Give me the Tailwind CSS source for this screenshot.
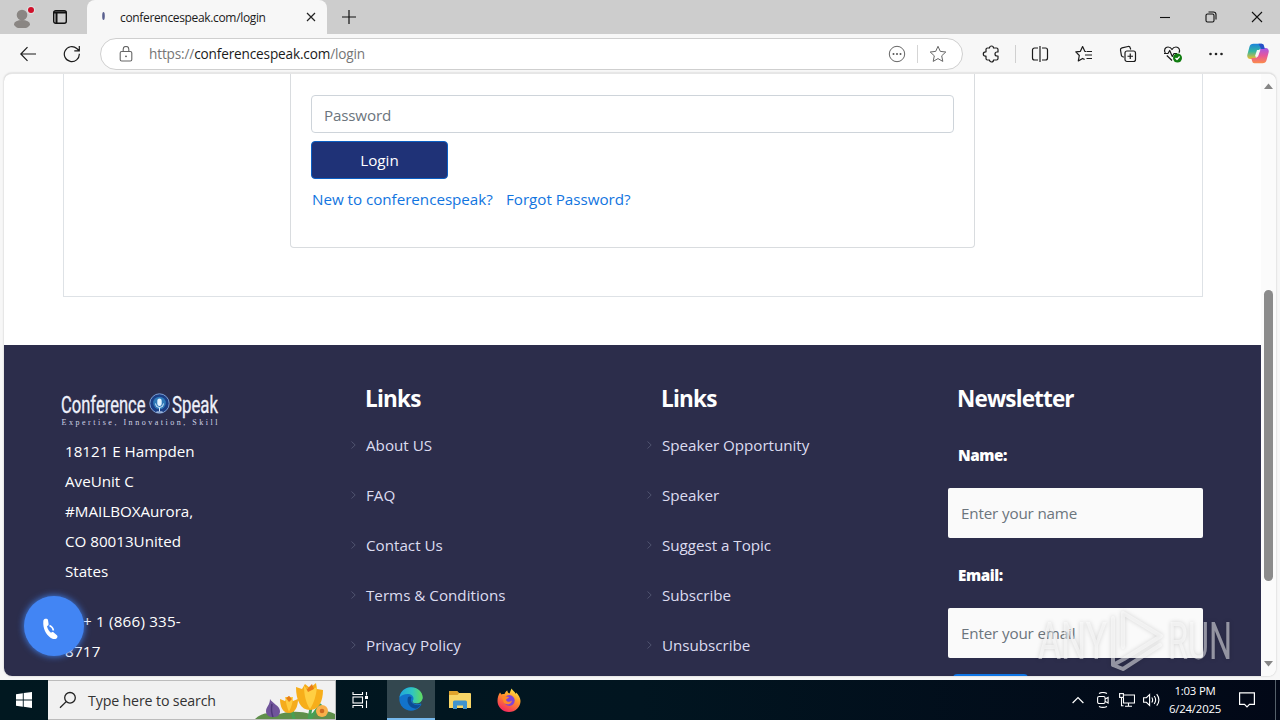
<!DOCTYPE html>
<html lang="en">
<head>
  <meta charset="UTF-8">
  <title>conferencespeak.com/login</title>
  <script src="https://cdn.jsdelivr.net/npm/@tailwindcss/browser@4"></script>
</head>
<body class="w-[1280px] h-[720px] overflow-hidden flex flex-col relative bg-[#f7f7f7] font-['Open_Sans',sans-serif] text-[15.2px]">

  <!-- Tab strip -->
  <div class="h-[34px] shrink-0 bg-[#cdcdcd] flex items-stretch">
    <div class="w-[87px] flex items-center pl-3 gap-[18px]">
      <svg class="w-6 h-6 shrink-0 -mt-[3px]" viewBox="0 0 24 24">
        <circle cx="10" cy="11" r="5.3" fill="#8a8683"/>
        <ellipse cx="10" cy="20.3" rx="8" ry="4.2" fill="#8a8683"/>
        <circle cx="19" cy="6" r="4.2" fill="#dedede"/>
        <circle cx="19" cy="6" r="3" fill="#d0112b"/>
      </svg>
      <svg class="w-4 h-4 -ml-[2px] shrink-0" viewBox="0 0 16 16" fill="none" stroke="#111" stroke-width="1.4">
        <rect x="1.7" y="1.7" width="12.6" height="12.6" rx="2"/>
        <path d="M1.7 3.500h12.6M4.500 4v10" stroke-width="2"/>
      </svg>
    </div>
    <div class="w-[240px] bg-[#f7f7f7] rounded-t-lg flex items-center">
      <svg class="w-4 h-4 ml-[8px]" viewBox="0 0 16 16"><ellipse cx="8.5" cy="7" rx="1.300" ry="4" fill="#5a608f"/></svg>
      <span class="ml-[9px] mt-px w-[170px] text-[12px] tracking-[-0.34px] text-[#1b1b1b]">conferencespeak.com/login</span>
      <svg class="w-3 h-3 ml-[15px]" viewBox="0 0 12 12" stroke="#222" stroke-width="1.2"><path d="M2 2l8 8M10 2l-8 8"/></svg>
    </div>
    <svg class="w-4 h-4 ml-[14px] self-center" viewBox="0 0 16 16" stroke="#111" stroke-width="1.2"><path d="M8 1v14M1 8h14"/></svg>
    <div class="ml-auto flex items-center gap-[34px] pr-[17px]">
      <svg class="w-3 h-3" viewBox="0 0 12 12" stroke="#111" stroke-width="1.1"><path d="M1 6.5h10"/></svg>
      <svg class="w-3 h-3" viewBox="0 0 12 12" fill="none" stroke="#111" stroke-width="1.1"><rect x="1" y="3" width="8" height="8" rx="1.5"/><path d="M3.5 1h5a2.5 2.5 0 0 1 2.500 2.500v5"/></svg>
      <svg class="w-3 h-3" viewBox="0 0 12 12" stroke="#111" stroke-width="1.1"><path d="M1 1l10 10M11 1L1 11"/></svg>
    </div>
  </div>

  <!-- Toolbar -->
  <div class="h-[39px] shrink-0 flex items-center pl-5">
    <svg class="w-4 h-4" viewBox="0 0 16 16" fill="none" stroke="#1b1b1b" stroke-width="1.2"><path d="M16 8H.8M7.500 1.200L.800 8l6.700 6.800"/></svg>
    <svg class="w-[18px] h-[18px] ml-[27px]" viewBox="0 0 18 18" fill="none" stroke="#1b1b1b" stroke-width="1.2"><path d="M16.300 8.800A7.500 7.500 0 1 1 13.800 3.500L16 5.500M16.300 1v4.800h-5"/></svg>
    <div class="ml-[19px] w-[863px] h-[32px] bg-white border border-[#cfcfcf] rounded-full flex items-center">
      <svg class="w-4 h-4 ml-[17px]" viewBox="0 0 16 16" fill="none" stroke="#666" stroke-width="1.100"><rect x="2.200" y="5.500" width="11.600" height="9.500" rx="1.500"/><path d="M5.200 5.500V3.200a2.800 2.800 0 0 1 5.600 0v2.300"/><circle cx="8" cy="10.300" r=".9" fill="#555" stroke="none"/></svg>
      <span class="ml-[15px] mt-px text-[13.6px] tracking-[-0.15px] text-[#767676]">https://<span class="text-[#1b1b1b]">conferencespeak.com</span>/login</span>
      <div class="ml-auto flex items-center pr-[15px]">
        <svg class="w-[18px] h-[18px]" viewBox="0 0 18 18" fill="none" stroke="#666" stroke-width="1"><circle cx="9" cy="9" r="7.700"/><g fill="#555" stroke="none"><circle cx="5.500" cy="9" r="1"/><circle cx="9" cy="9" r="1"/><circle cx="12.500" cy="9" r="1"/></g></svg>
        <div class="w-px h-[18px] bg-[#d5d5d5] ml-[11px]"></div>
        <svg class="w-[18px] h-[18px] ml-[11px]" viewBox="0 0 18 18" fill="none" stroke="#666" stroke-width="1" stroke-linejoin="round"><path d="M9 1.300l2.300 5.100 5.500.6-4.100 3.800 1.100 5.600L9 13.600l-4.800 2.800 1.100-5.600L1.200 7l5.500-.6z"/></svg>
      </div>
    </div>
    <svg class="w-[18px] h-[18px] ml-[19px]" viewBox="0 0 18 18" fill="none" stroke="#1b1b1b" stroke-width="1.200" stroke-linejoin="round"><path d="M5.500 3h2a2 2 0 0 1 4 0h3a1.500 1.500 0 0 1 1.500 1.500V7h-1a1.900 1.900 0 0 0 0 4h1v2.500a1.500 1.500 0 0 1-1.500 1.500h-3a2 2 0 0 1-4 0h-2A1.500 1.500 0 0 1 4 13.500v-2.300h-.5a2.200 2.200 0 0 1 0-4.400H4V4.500A1.500 1.500 0 0 1 5.500 3z"/></svg>
    <div class="w-px h-[18px] bg-[#d0d0d0] ml-[15px]"></div>
    <svg class="w-[18px] h-[18px] ml-[15px]" viewBox="0 0 18 18" fill="none" stroke="#1b1b1b" stroke-width="1.200"><path d="M7 3H3.500a2 2 0 0 0-2 2v8a2 2 0 0 0 2 2H7M11 3h3.500a2 2 0 0 1 2 2v8a2 2 0 0 1-2 2H11M9 1v16"/></svg>
    <svg class="w-[18px] h-[18px] ml-[26px]" viewBox="0 0 18 18" fill="none" stroke="#1b1b1b" stroke-width="1.200" stroke-linejoin="round"><path d="M11 6.500L9.800 6.300 7.600 1.500 5.400 6.300.8 6.900l3.500 3.600-1 5.400 4.300-2.500 2 1.200M11.500 6.500H17M10 10h7M11.500 13.500H17"/></svg>
    <svg class="w-[18px] h-[18px] ml-[26px]" viewBox="0 0 18 18" fill="none" stroke="#1b1b1b" stroke-width="1.200"><rect x="6" y="6" width="10.500" height="10.500" rx="2"/><path d="M11.250 8.500v5.500M8.500 11.250H14M4.800 12.200L3.300 11.500a2 2 0 0 1-1-1.600L1.500 5A2 2 0 0 1 3 2.800l6-1.300A2 2 0 0 1 11.300 3l.4 1.500"/></svg>
    <svg class="w-5 h-[18px] ml-[26px]" viewBox="0 0 20 18" fill="none" stroke="#1b1b1b" stroke-width="1.200" stroke-linejoin="round"><path d="M2.300 8C.5 5 2.200 2 5 2c2 0 3.400 1.300 4 2.500C9.600 3.300 11 2 13 2c2.800 0 4.500 3 3 5.700M3.800 10.500L9 15.500M1 8.500h4l1.700-3 2.600 6 1.700-3h3"/><circle cx="14.500" cy="13" r="4.500" fill="#107c10" stroke="none"/><path d="M12.500 13l1.500 1.500 2.600-3" stroke="#fff"/></svg>
    <svg class="w-4 h-4 ml-[25px]" viewBox="0 0 16 16" fill="#222"><circle cx="2.500" cy="8" r="1.300"/><circle cx="8" cy="8" r="1.300"/><circle cx="13.500" cy="8" r="1.300"/></svg>
    <svg class="w-[22px] h-[21px] ml-[23px]" viewBox="0 0 22 21">
      <defs>
        <linearGradient id="cpA" x1="0" y1="0" x2="0" y2="1"><stop offset="0" stop-color="#1b83dc"/><stop offset=".5" stop-color="#35b7a0"/><stop offset="1" stop-color="#f2bd2c"/></linearGradient>
        <linearGradient id="cpB" x1="0" y1="0" x2="0" y2="1"><stop offset="0" stop-color="#a259e8"/><stop offset=".5" stop-color="#e7569b"/><stop offset="1" stop-color="#fb8b4a"/></linearGradient>
      </defs>
      <path d="M6.500.8h8c1.500 0 2 .8 2.500 2.500l.7 2.700h-3.500c-2 0-2.700 1-3.200 2.500L9 14c-.5 1.500-1 2-2.500 2H3.200C.8 16-.2 14 .4 11.500l2-7.500C3 1.800 4.300.8 6.500.8z" fill="url(#cpA)"/>
      <path d="M15.500 20.200h-8c-1.500 0-2-.8-2.500-2.500L4.300 15h3.500c2 0 2.700-1 3.200-2.500L13 7c.5-1.500 1-2 2.500-2h3.300c2.400 0 3.400 2 2.800 4.500l-2 7.500c-.6 2.200-1.900 3.200-4.100 3.200z" fill="url(#cpB)"/>
      <path d="M11.500.8h3c1.500 0 2 .8 2.500 2.500l.7 2.700h-3.500z" fill="#2750c8"/>
      <path d="M10 7h3.300l-2.300 6.500H7.900z" fill="#f7f7f7"/>
    </svg>
  </div>

  <!-- Page viewport -->
  <div class="h-[603px] shrink-0 ml-1 mr-[4px] flex rounded-lg overflow-hidden bg-white border-t border-[#e6e6e6] shadow-[0_0_2px_#bbb]">
    <div class="w-[1257px] flex flex-col">
      <div class="h-[223px] shrink-0 ml-[59px] w-[1140px] border border-t-0 border-[#dee2e6]">
        <div class="h-[174px] ml-[226px] w-[685px] border border-t-0 border-[#d9dcdf] rounded-b px-5 pt-[21px]">
          <input type="password" placeholder="Password" class="block w-full h-[38px] px-3 pt-[2px] border border-[#ced4da] rounded placeholder:text-[#6c757d] tracking-[-0.17px]">
          <button class="mt-2 block w-[137px] h-[38px] rounded bg-[#1f3277] border border-[#0b5fc4] text-white">Login</button>
          <div class="flex gap-[13px] mt-[8px] pl-px leading-6 tracking-[-0.03px] text-[#1275e0]">
            <a href="#" class="w-[181px] whitespace-nowrap">New to conferencespeak?</a>
            <a href="#" class="whitespace-nowrap">Forgot Password?</a>
          </div>
        </div>
      </div>

      <footer class="mt-[48px] flex-1 min-h-0 overflow-hidden bg-[#2c2d4b] flex text-[#dcdcf0]">
        <div class="w-[291px] shrink-0 pl-[57px] pt-[45px] text-white">
          <svg class="w-[170px] h-[40px] overflow-visible" viewBox="61 390 170 40">
            <g fill="#eef0fa" font-family="Roboto" font-size="23">
              <text x="61" y="412.500" textLength="84.500" lengthAdjust="spacingAndGlyphs" stroke="#eef0fa" stroke-width=".3">Conference</text>
              <text x="172" y="412.500" textLength="46" lengthAdjust="spacingAndGlyphs" stroke="#eef0fa" stroke-width=".3">Speak</text>
            </g>
            <circle cx="159.500" cy="403.500" r="9.700" fill="#1b3f86" stroke="#7d9fd4" stroke-width="1"/>
            <circle cx="159.500" cy="403" r="6.300" fill="#2f7ab8"/>
            <rect x="157.300" y="398.500" width="4.400" height="7.500" rx="2.200" fill="#e4f4ff"/>
            <path d="M155.500 403.500a4 4 0 0 0 8 0M159.500 407.500v4M156.500 412h6" fill="none" stroke="#d5ebff"/>
            <text x="61.500" y="425" font-family="Liberation Serif" font-size="8" fill="#d2d4e6" textLength="156">Expertise, Innovation, Skill</text>
          </svg>
          <div class="ml-[4px] mt-[6px] leading-[30px] whitespace-nowrap tracking-[-0.02px]">
            <p>18121 E Hampden<br>AveUnit C<br>#MAILBOXAurora,<br>CO 80013United<br>States</p>
            <p class="mt-5 tracking-[0.2px]"><span class="inline-block w-[18px]"></span>+ 1 (866) 335-<br>8717</p>
          </div>
        </div>

        <div class="w-[296px] shrink-0 pl-[56px] pt-[38px]">
          <h4 class="ml-[14px] text-[22.5px] tracking-[-0.75px] font-bold leading-8 text-white">Links</h4>
          <ul class="mt-[5px] leading-[50px]">
            <li class="flex items-center gap-[10px]"><svg class="w-[5px] h-2 shrink-0" viewBox="0 0 5 8" fill="none" stroke="#50536f"><path d="M.5.5L4.200 4 .5 7.500"/></svg>About US</li>
            <li class="flex items-center gap-[10px]"><svg class="w-[5px] h-2 shrink-0" viewBox="0 0 5 8" fill="none" stroke="#50536f"><path d="M.5.5L4.200 4 .5 7.500"/></svg>FAQ</li>
            <li class="flex items-center gap-[10px]"><svg class="w-[5px] h-2 shrink-0" viewBox="0 0 5 8" fill="none" stroke="#50536f"><path d="M.5.5L4.200 4 .5 7.500"/></svg>Contact Us</li>
            <li class="flex items-center gap-[10px]"><svg class="w-[5px] h-2 shrink-0" viewBox="0 0 5 8" fill="none" stroke="#50536f"><path d="M.5.5L4.200 4 .5 7.500"/></svg>Terms &amp; Conditions</li>
            <li class="flex items-center gap-[10px]"><svg class="w-[5px] h-2 shrink-0" viewBox="0 0 5 8" fill="none" stroke="#50536f"><path d="M.5.5L4.200 4 .5 7.500"/></svg>Privacy Policy</li>
          </ul>
        </div>

        <div class="w-[295px] shrink-0 pl-[56px] pt-[38px]">
          <h4 class="ml-[14px] text-[22.5px] tracking-[-0.75px] font-bold leading-8 text-white">Links</h4>
          <ul class="mt-[5px] leading-[50px] tracking-[-0.03px]">
            <li class="flex items-center gap-[10px]"><svg class="w-[5px] h-2 shrink-0" viewBox="0 0 5 8" fill="none" stroke="#50536f"><path d="M.5.5L4.200 4 .5 7.500"/></svg>Speaker Opportunity</li>
            <li class="flex items-center gap-[10px]"><svg class="w-[5px] h-2 shrink-0" viewBox="0 0 5 8" fill="none" stroke="#50536f"><path d="M.5.5L4.200 4 .5 7.500"/></svg>Speaker</li>
            <li class="flex items-center gap-[10px]"><svg class="w-[5px] h-2 shrink-0" viewBox="0 0 5 8" fill="none" stroke="#50536f"><path d="M.5.5L4.200 4 .5 7.500"/></svg>Suggest a Topic</li>
            <li class="flex items-center gap-[10px]"><svg class="w-[5px] h-2 shrink-0" viewBox="0 0 5 8" fill="none" stroke="#50536f"><path d="M.5.5L4.200 4 .5 7.500"/></svg>Subscribe</li>
            <li class="flex items-center gap-[10px]"><svg class="w-[5px] h-2 shrink-0" viewBox="0 0 5 8" fill="none" stroke="#50536f"><path d="M.5.5L4.200 4 .5 7.500"/></svg>Unsubscribe</li>
          </ul>
        </div>

        <div class="ml-[62px] w-[255px] shrink-0 pt-[38px]">
          <h4 class="ml-[9px] text-[22.5px] tracking-[-0.85px] font-bold leading-8 text-white">Newsletter</h4>
          <label class="block ml-[10px] mt-[15px] mb-[8px] leading-[50px] font-extrabold tracking-[-0.4px] text-white">Name:</label>
          <input type="text" placeholder="Enter your name" class="block w-full h-[50px] px-[13px] bg-[#fafafa] rounded-xs tracking-[-0.15px] placeholder:text-[#6c757d]">
          <label class="block ml-[10px] mt-[12px] mb-[8px] leading-[50px] font-extrabold tracking-[-0.4px] text-white">Email:</label>
          <input type="text" placeholder="Enter your email" class="block w-full h-[50px] px-[13px] bg-[#fafafa] rounded-xs tracking-[-0.15px] placeholder:text-[#6c757d]">
          <button class="ml-[5px] mt-4 block w-[75px] h-[38px] rounded bg-[#0f76e6]"></button>
        </div>
      </footer>
    </div>

    <!-- Scrollbar -->
    <div class="w-[15px] bg-[#fbfbfb] flex flex-col items-center pt-[9px] pb-[9px]">
      <svg class="w-[9px] h-[6px]" viewBox="0 0 9 6"><path d="M0 6L4.500.5 9 6z" fill="#868686"/></svg>
      <div class="mt-[201px] w-[9px] h-[291px] rounded-full bg-[#8b8b8b]"></div>
      <svg class="mt-auto w-[9px] h-[6px]" viewBox="0 0 9 6"><path d="M0 0h9L4.500 5.500z" fill="#868686"/></svg>
    </div>
  </div>

  <!-- Call button -->
  <div class="absolute left-[24px] top-[596px] w-[60px] h-[60px] rounded-full bg-[#4285f4] shadow-[0_0_7px_#4285f4]">
    <svg class="w-[18px] h-[24px] absolute left-[18px] top-[22px]" viewBox="0 0 18 24" fill="#fff">
      <path d="M2.500 1C4 .4 5.800.7 6 2l.6 4c.2 1.200-.8 1.800-1.600 2.200.6 2.800 2 5 4 6.500.8-.6 1.700-1 2.700-.2l3.200 2.700c1 .9.700 2.300-.4 3.200-1.500 1.200-4 .8-6-.7C3.900 16.500.8 10.500 1.300 3.500 1.400 2.200 1.700 1.400 2.500 1z"/>
      <path d="M7.500 7.500c2 .8 3.600 2.700 4 5" fill="none" stroke="#fff" stroke-width="1.500"/>
    </svg>
  </div>

  <!-- Watermark -->
  <svg class="absolute left-[1025px] top-[604px] w-[225px] h-[72px] drop-shadow-[0_0_2px_rgba(0,0,0,0.3)]" viewBox="1025 604 225 72">
    <g fill="#fff" fill-opacity=".5" font-family="Roboto" font-size="52" font-weight="400">
      <text x="1038" y="659" textLength="69" lengthAdjust="spacingAndGlyphs">ANY</text>
      <text x="1168" y="659" textLength="64" lengthAdjust="spacingAndGlyphs">RUN</text>
    </g>
    <g fill="none" stroke="#fff" stroke-opacity=".5" stroke-width="4" stroke-linejoin="round" stroke-linecap="round">
      <path d="M1123 647v-34l38 23-37 23-11 6v-47M1123 669l37-24M1123 669l-10-4"/>
    </g>
  </svg>

  <!-- Taskbar -->
  <div class="mt-auto h-[40px] shrink-0 flex items-stretch bg-linear-to-r from-[#011820] via-[#011520] to-[#020817] text-white">
    <div class="w-[48px] flex items-center justify-center">
      <svg class="w-4 h-4" viewBox="0 0 16 16" fill="#fff"><path d="M0 2.200l6.800-1v6.300H0zM7.700 1.100L16 0v7.500H7.700zM0 8.400h6.800v6.300l-6.800-1zM7.700 8.400H16V16l-8.300-1.200z"/></svg>
    </div>
    <div class="w-[288px] bg-[#f1f1f1] border border-[#bcbcbc] border-l-0 flex items-center text-[#333]">
      <svg class="w-[18px] h-[18px] ml-[11px]" viewBox="0 0 18 18" fill="none" stroke="#222" stroke-width="1.300"><circle cx="11" cy="6.800" r="5.300"/><path d="M7.200 10.600L1 16.800"/></svg>
      <span class="ml-[11px] mt-px text-[14.2px] tracking-[-0.14px]">Type here to search</span>
      <svg class="w-[80px] h-[38px] ml-auto" viewBox="256 681 80 38">
        <path d="M256 719c6-6 14-7 22-4 10-4 24-4 33-1 8-4 18-4 25 0v5z" fill="#5f8f4b"/>
        <path d="M292 706l3 13M313 702l-3 17M322 704l-11 15" stroke="#46a055" stroke-width="3" fill="none"/>
        <path d="M271 699c2 4 10 7 10 12s-3 6-7 6-7-2-7-6 4-6 4-12z" fill="#70549b"/>
        <path d="M273 704c-1 5-1 8 1 13" stroke="#4e3779" stroke-width="1.500" fill="none"/>
        <path d="M281 699l5 2 4-5 4 5 5-2c0 8-3 14-9 14s-9-6-9-14z" fill="#f5ac1c"/>
        <path d="M286 697c1 6 2 10 4 15 2-5 4-9 4-15" fill="#ffcb3f"/>
        <path d="M297 687l6 2 3-5 5 4 6-5 1 6 6 1c0 11-4 20-13 20s-14-9-14-23z" fill="#f7ae1a"/>
        <path d="M305 686c0 9 2 17 6 23 4-6 6-13 7-22l-6 3z" fill="#ffcf43"/>
        <path d="M305 684l3 5 5-5 2 5-6 3zM287 698l3-2 3 3-3 3z" fill="#e97e16"/>
        <circle cx="323" cy="711" r="6" fill="#f9b04a"/><circle cx="323" cy="711" r="2.300" fill="#cf6b20"/>
      </svg>
    </div>
    <div class="w-[51px] flex items-center pl-4">
      <svg class="w-4 h-4" viewBox="0 0 16 16" fill="none" stroke="#fff" stroke-width="1.100"><path d="M1 0v2.500h9.500V0M1 16v-2.500h9.500V16M14.500 0v3.500M14.500 8.500V16"/><rect x="1" y="5" width="9.500" height="6"/><rect x="13" y="4" width="3" height="3" fill="#fff" stroke="none"/></svg>
    </div>
    <div class="w-[48px] bg-[#33474f] border-b-2 border-[#76b9ed] flex items-center justify-center">
      <svg class="w-6 h-6" viewBox="0 0 24 24">
        <defs><linearGradient id="eg" x1="0" y1="0" x2="1" y2="0"><stop offset="0" stop-color="#1fa6dd"/><stop offset=".55" stop-color="#30c5c0"/><stop offset="1" stop-color="#63dc5a"/></linearGradient></defs>
        <circle cx="12" cy="12" r="11.700" fill="#1273cb"/>
        <path d="M.5 10.500C1.500 4.500 6.200.3 12 .3c6.500 0 11.700 4.800 11.700 10.200 0 3.500-2.700 6-6 6-2.800 0-4.300-1-4.300-2 0-.7 1.100-1.200 1.100-3C14.500 8.800 12 7 8.700 7 5 7 2 8.500.5 10.500z" fill="url(#eg)"/>
        <path d="M9 10.200c-1.800 5.300 1.500 11 8 11.500 2-.8 3.800-2.300 5-4.200-2.300 1-5.800 1.100-8.300-.9-1.900-1.600-2.400-4-1.200-6.200-.8-1-2.500-1-3.500-.2z" fill="#0c4c94"/>
        <path d="M22 17.300c.5-.5.300-.9-.3-.7-3 1.300-7.800 1-9-3.100l1 1c0 1 1.500 2 4 2 3 0 5.400-2 6-5l.3 2-1 3.500z" fill="#33474f"/>
      </svg>
    </div>
    <div class="w-[49px] flex items-center justify-center">
      <svg class="w-[22px] h-5" viewBox="0 0 22 20"><path d="M0 2a1 1 0 0 1 1-1h7l2 2h11a1 1 0 0 1 1 1v14H0z" fill="#f8d566"/><path d="M0 4V2a1 1 0 0 1 1-1h7l2 2.500L8.500 5H0z" fill="#e0a32c"/><path d="M4 19v-7a1.500 1.500 0 0 1 1.500-1.500h11A1.500 1.500 0 0 1 18 12v7h-4v-3.500H8V19z" fill="#3f93cf"/></svg>
    </div>
    <div class="w-[49px] flex items-center justify-center">
      <svg class="w-6 h-6" viewBox="0 0 24 24">
        <defs><linearGradient id="ff" x1=".8" y1="0" x2=".3" y2="1"><stop offset="0" stop-color="#fff04a"/><stop offset=".4" stop-color="#ff9a2a"/><stop offset="1" stop-color="#f5245f"/></linearGradient></defs>
        <path d="M3 4.500l1.500 2c1-.5 2-.6 3-.5.5-1.500 1.500-3 3-3.500-.3 1.500.5 2.500 2 3L14.500.5c1 2 3 3 4.500 5.500V4.500c2.500 2 4.500 5.500 4.500 8.500A11.500 11 0 0 1 .5 13C.5 9.500 1.500 6.500 3 4.500z" fill="url(#ff)"/>
        <circle cx="12.300" cy="12.500" r="5.400" fill="#8043d6"/>
        <path d="M4.500 8.500c2-1.200 5 0 7.500.5-.5 1.800-2.500 1.300-3 3 1 2.500 4 2 6 .5-.5 4-5 5-8 2.500" fill="#ff8a27"/>
      </svg>
    </div>
    <div class="ml-auto flex items-center">
      <svg class="w-3 h-2 mr-[13px]" viewBox="0 0 12 8" fill="none" stroke="#fff" stroke-width="1.200"><path d="M.6 7L6 1.500 11.400 7"/></svg>
      <svg class="w-3 h-4 mr-[10px]" viewBox="0 0 12 16" fill="none" stroke="#fff" stroke-width="1.100"><rect x=".6" y="4.500" width="7.500" height="7" rx="1.500"/><path d="M8.100 7l3-1.500v5.600l-3-1.800M2 1.500c2.300-1.200 5.500-1.200 8 0M2 14.500c2.300 1.100 5.500 1.100 8 0"/></svg>
      <svg class="w-4 h-4 mr-[8px]" viewBox="0 0 16 16" fill="none" stroke="#fff" stroke-width="1.100"><path d="M5 3h10.500v8H4.500V6M9.500 11v3M6 14.300h7"/><rect x=".6" y="1.600" width="3.800" height="3.800"/><path d="M2.500 5.400v8.400h2"/></svg>
      <svg class="w-[17px] h-4 mr-[8px]" viewBox="0 0 17 16" fill="none" stroke="#fff" stroke-width="1.100"><path d="M.6 5.700h2.800l3.200-3.200v11L3.400 10.300H.6zM8.800 5.500c1 1.500 1 3.500 0 5M11.200 4c1.800 2.500 1.800 5.500 0 8M13.700 2.200c2.700 3.500 2.700 8 0 11.500"/></svg>
      <div class="w-[54px] text-center text-[11.400px] leading-[18px] tracking-[-0.2px] whitespace-nowrap">1:03 PM<br>6/24/2025</div>
      <svg class="w-4 h-4 ml-[17px]" viewBox="0 0 16 16" fill="none" stroke="#fff" stroke-width="1.200"><path d="M.6.8h14.800v11.500H10.500L8 14.800l-2.500-2.500H.6z"/></svg>
      <div class="ml-[20px] w-px h-[40px] bg-[#55606a] mr-[4px]"></div>
    </div>
  </div>
</body>
</html>
